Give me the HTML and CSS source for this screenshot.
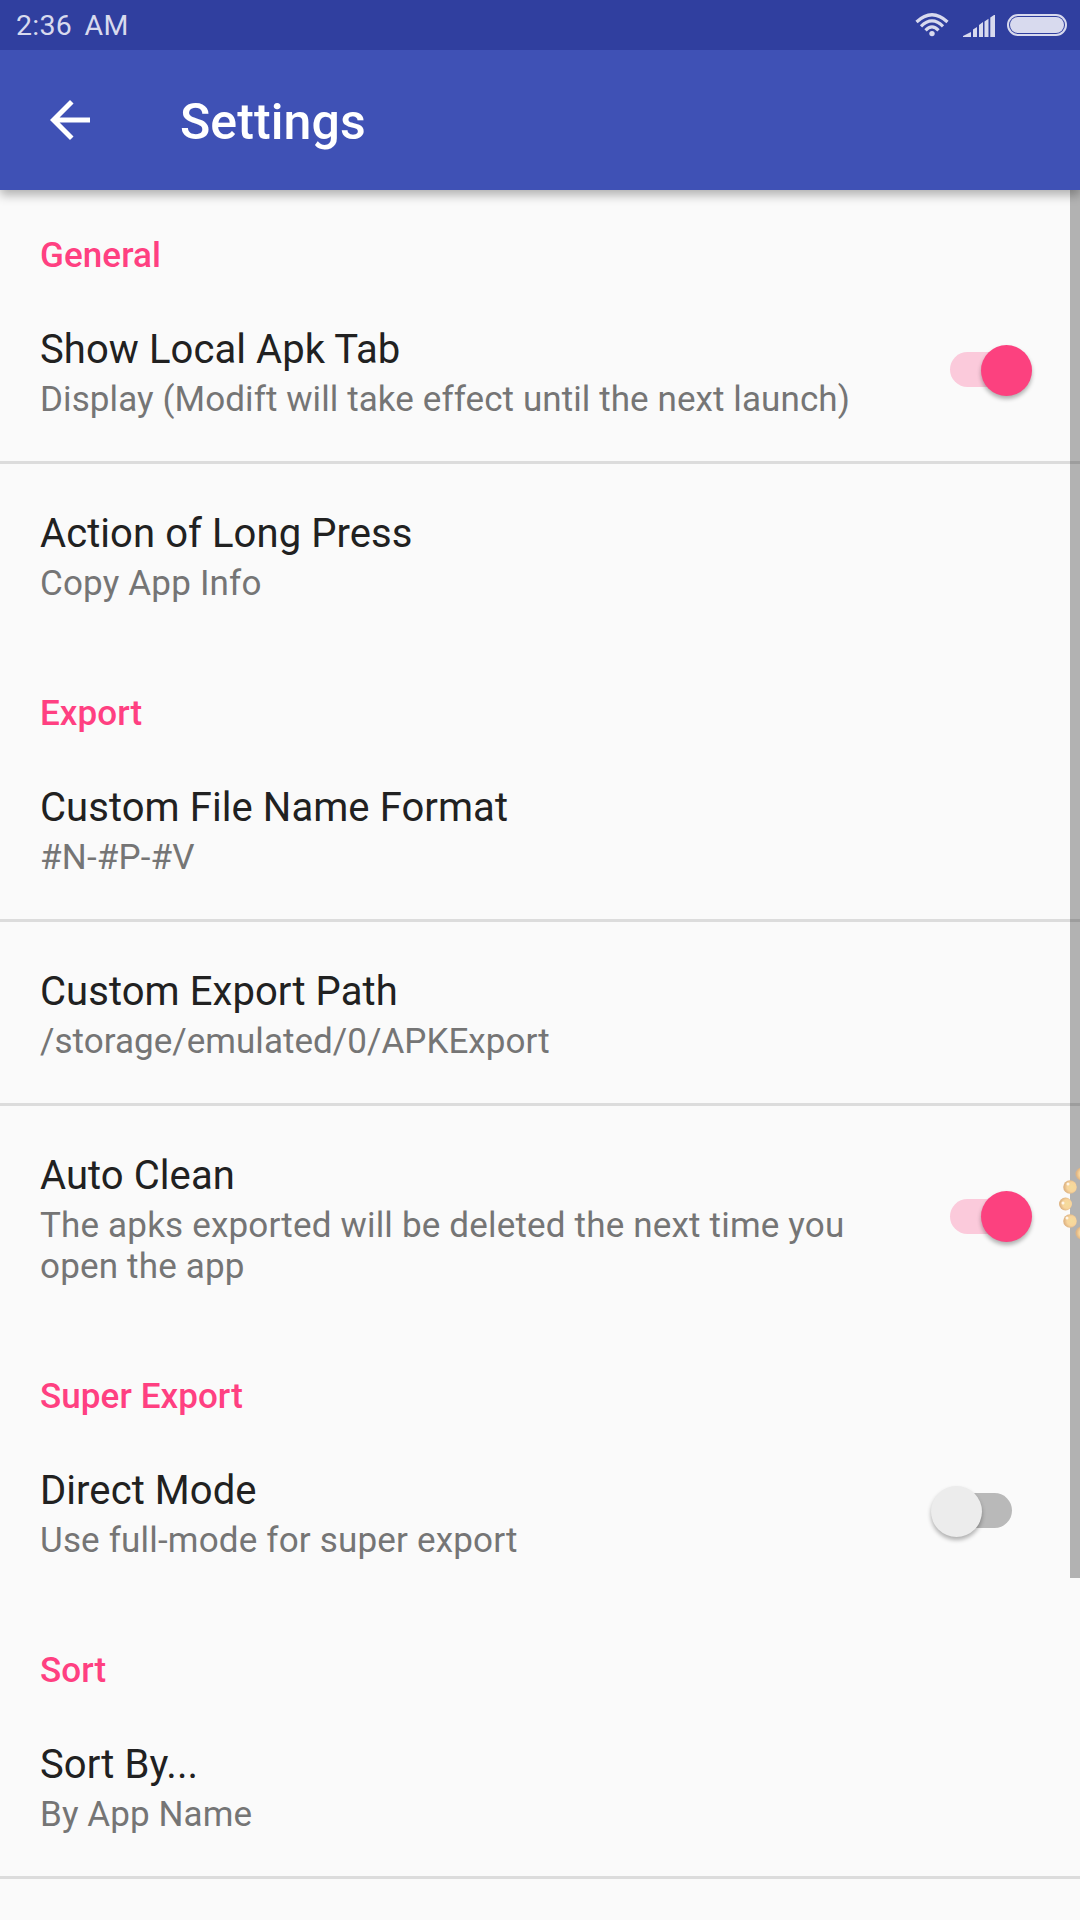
FILE: index.html
```html
<!DOCTYPE html>
<html lang="en">
<head>
<meta charset="utf-8">
<title>Settings</title>
<link rel="stylesheet" href="styles.css">
</head>
<body>
<div class="screen">
<header class="status"><span class="time">2:36&nbsp; AM</span>
<span class="status-icons">
<svg class="wifi" width="34" height="24" viewBox="0 0 34 24"><g fill="none" stroke="#d8daee" stroke-width="3.2"><path d="M1.500 9Q17-5.400 32.500 9"/><path d="M6 13.300Q17 2.500 28 13.300"/><path d="M10.500 17.300Q17 10.500 23.500 17.300"/></g><circle cx="17" cy="20.600" r="2.700" fill="#d8daee"/></svg>
<svg class="signal" width="32" height="22" viewBox="0 0 32 22"><path fill="#d8daee" d="M0 22v-1l8-4v5zM10 22v-7.400l4-2.600v10zM16 22V10l4-3v15zM21.500 22V6.500l4-2.700V22zM27.300 22V2.600L31 0h1v22z"/></svg>
<span class="battery"></span></span></header>
<nav class="toolbar"><svg width="60" height="60" viewBox="0 0 24 24"><path d="M20 11H7.830l5.590-5.590L12 4l-8 8 8 8 1.410-1.410L7.830 13H20v-2z" fill="#fff"/></svg><h1>Settings</h1></nav>
<main>
<section><h2>General</h2>
<div class="item"><div class="text"><h3>Show Local Apk Tab</h3><p>Display (Modift will take effect until the next launch)</p></div><span class="switch on"></span></div>
<div class="item"><div class="text"><h3>Action of Long Press</h3><p class="loose">Copy App Info</p></div></div></section>
<section><h2>Export</h2>
<div class="item"><div class="text"><h3>Custom File Name Format</h3><p class="loose">#N-#P-#V</p></div></div>
<div class="item"><div class="text"><h3>Custom Export Path</h3><p class="tight">/storage/emulated/0/APKExport</p></div></div>
<div class="item"><div class="text"><h3>Auto Clean</h3><p class="loose">The apks exported will be deleted the next time you open the app</p></div><span class="switch on"></span></div></section>
<section><h2>Super Export</h2>
<div class="item"><div class="text"><h3>Direct Mode</h3><p class="loose">Use full-mode for super export</p></div><span class="switch"></span></div></section>
<section><h2>Sort</h2>
<div class="item divided"><div class="text"><h3>Sort By...</h3><p>By App Name</p></div></div></section>
</main>
<div class="scrollbar"></div>
<svg class="beads" width="22" height="76" viewBox="0 0 22 76"><defs><radialGradient id="bead" cx=".62" cy=".5" r=".55"><stop offset="0" stop-color="#f4dc9c"/><stop offset=".6" stop-color="#f8d59c"/><stop offset="1" stop-color="#dfb584"/></radialGradient></defs><g fill="url(#bead)"><circle cx="24" cy="9" r="6.500"/><circle cx="12" cy="22" r="6.800"/><circle cx="7.500" cy="39" r="6.500"/><circle cx="12" cy="56" r="6.800"/><circle cx="24" cy="68" r="6.500"/></g><g fill="#fff6e8"><circle cx="10" cy="19" r="1.500"/><circle cx="5" cy="38" r="1.500"/><circle cx="9" cy="53" r="1.500"/></g></svg>
</div>
</body>
</html>
```
FILE: styles.css
```css
* { box-sizing: border-box; }
body { margin: 0; font-family: Roboto, sans-serif; }
h1, h2, h3, p { margin: 0; }
.screen { position: relative; width: 1080px; height: 1920px; overflow: hidden; background: #fafafa; }
.status { height: 50px; background: #303f9f; display: flex; align-items: center; justify-content: space-between; padding: 0 13px 0 16px; color: #d8daee; }
.time { font-size: 28.5px; letter-spacing: .25px; word-spacing: -1px; padding-top: 1px; }
.status-icons { display: flex; align-items: center; gap: 12px; }
.wifi { margin-right: 2px; }
.signal { margin-top: 1px; }
.battery { width: 60px; height: 22px; border: 2px solid #d8daee; border-radius: 11px; position: relative; }
.battery::after { content: ""; position: absolute; inset: 1px; border-radius: 9px; background: #d8daee; }
.toolbar { position: relative; height: 140px; background: #3f51b5; display: flex; align-items: center; padding-left: 40px; box-shadow: 0 5px 10px rgba(0,0,0,.3); color: #fff; }
.status { position: relative; z-index: 1; }
h1 { font-size: 50px; font-weight: 500; letter-spacing: .1px; margin-left: 80px; padding-top: 4px; }
h2 { height: 90px; padding: 45px 40px 0; font-size: 35px; line-height: 42px; font-weight: 500; letter-spacing: .08px; color: #ff4081; }
.item { display: flex; align-items: center; justify-content: space-between; min-height: 184px; padding: 45px 48px 41px 40px; border-bottom: 3px solid transparent; }
.item:not(:last-child), .divided { border-bottom-color: #dcdcdc; }
.text { width: 825px; }
h3 { font-size: 40px; line-height: 50px; font-weight: 400; letter-spacing: .07px; color: #212121; }
p { margin-top: 4px; font-size: 35px; line-height: 41px; letter-spacing: .09px; color: #757575; }
.loose { letter-spacing: .18px; }
.tight { letter-spacing: .03px; }
.switch { position: relative; width: 101px; height: 51px; margin-top: -5px; }
.switch::before { content: ""; position: absolute; left: 20px; top: 7.5px; width: 61px; height: 35px; border-radius: 18px; background: #b9b9b9; }
.switch::after { content: ""; position: absolute; left: 0; top: 0; width: 51px; height: 51px; border-radius: 50%; background: #ececec; box-shadow: 0 3px 4px rgba(0,0,0,.3); }
.switch.on::before { left: 19px; background: #fbcadb; }
.switch.on::after { left: 50px; background: #fc417f; }
.scrollbar { position: absolute; right: 0; top: 190px; width: 10px; height: 1388px; background: rgba(0,0,0,.285); }
.beads { position: absolute; right: 0; top: 1165px; }
```
